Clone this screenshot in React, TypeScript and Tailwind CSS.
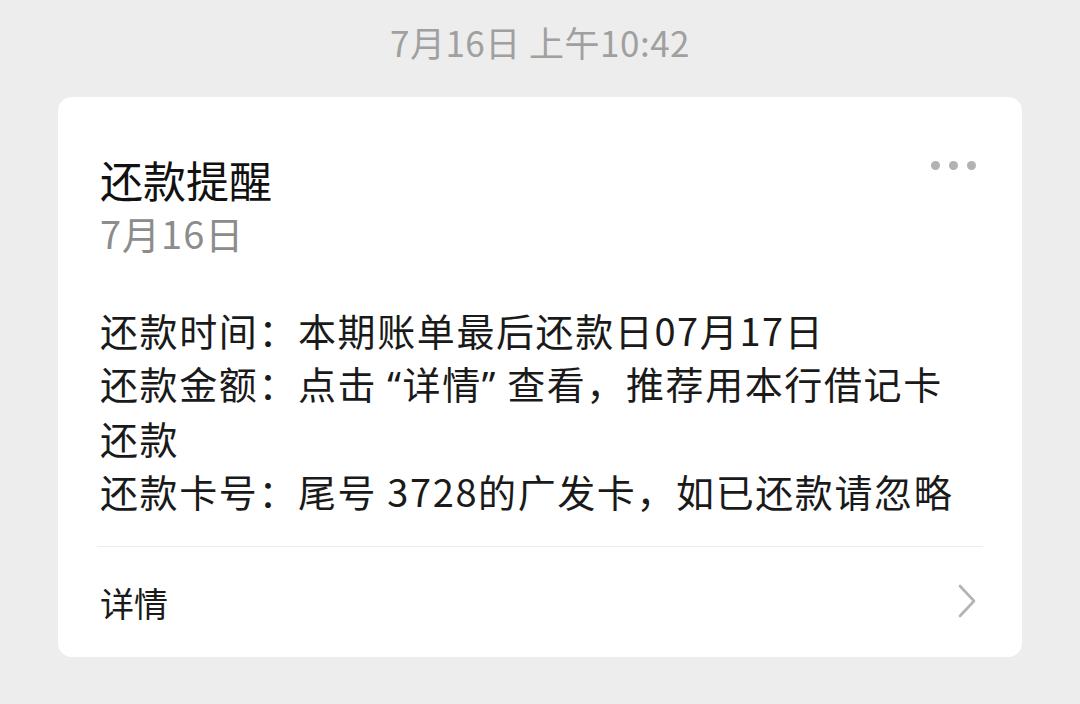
const font = { fontFamily: '"Noto Sans CJK SC", "Noto Sans", sans-serif' };

// Latin-width curly quotes, as the reference renders them narrow
const Q = ({ children }: { children: string }) => (
  <span style={{ fontFamily: '"Noto Sans", sans-serif' }}>{children}</span>
);

export default function App() {
  return (
    <div className="w-[1080px] h-[704px] bg-[#ededed] overflow-hidden" style={font}>
      {/* Timestamp */}
      <div className="pt-[20px] h-[97px] text-center text-[35px] leading-[44px] tracking-[0.5px] text-[#a0a0a0]">
        7月16日 上午10:42
      </div>

      {/* Card */}
      <div className="mx-[58px] bg-white rounded-[14px]">
        <div className="relative px-[42px] pt-[56px]">
          <div className="absolute right-[46px] top-[64px] flex gap-[9px]">
            <span className="w-[9px] h-[9px] rounded-full bg-[#b2b2b2]" />
            <span className="w-[9px] h-[9px] rounded-full bg-[#b2b2b2]" />
            <span className="w-[9px] h-[9px] rounded-full bg-[#b2b2b2]" />
          </div>
          <div className="text-[43px] leading-[53px] text-[#111111]">还款提醒</div>
          <div className="text-[38px] leading-[53px] tracking-[1px] text-[#8c8c8c]">7月16日</div>

          <div className="mt-[44px] text-[38px] leading-[53px] tracking-[1.6px] text-[#1a1a1a]">
            <div>还款时间：本期账单最后还款日07月17日</div>
            <div>
              还款金额：点击 <Q>“</Q>详情<Q>”</Q> 查看，推荐用本行借记卡
              <span className="whitespace-nowrap">还款</span>
            </div>
            <div>还款卡号：尾号 3728的广发卡，如已还款请忽略</div>
          </div>
        </div>

        <div className="mx-[39px] mt-[29px] h-[1px] bg-[#ececec]" />

        <div className="flex items-center justify-between h-[110px] pl-[42px] pr-[45px]">
          <span className="text-[34px] text-[#1a1a1a]">详情</span>
          <svg width="20" height="36" viewBox="0 0 20 36" fill="none" className="-mt-[2px]">
            <polyline
              points="3,3 17,18 3,33"
              stroke="#b3b3b3"
              strokeWidth="2.6"
              strokeLinecap="round"
              strokeLinejoin="round"
            />
          </svg>
        </div>
      </div>
    </div>
  );
}
